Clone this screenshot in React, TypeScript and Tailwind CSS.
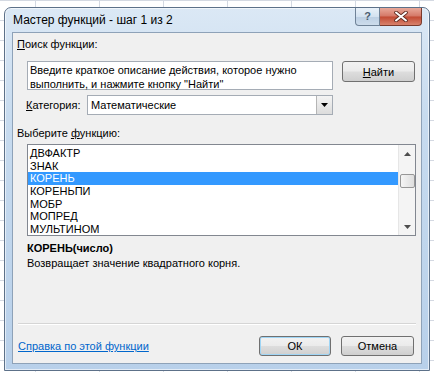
const items = ["ДВФАКТР", "ЗНАК", "КОРЕНЬ", "КОРЕНЬПИ", "МОБР", "МОПРЕД", "МУЛЬТИНОМ"];

const btn =
  "flex items-center justify-center rounded-[3px] border border-[#707070] bg-[linear-gradient(#f2f2f2_0%,#ebebeb_48%,#dddddd_52%,#cfcfcf_100%)] text-[11px] text-black";

const App = () => {
  return (
    <div
      className="w-[434px] h-[372px] overflow-hidden pt-[7px] pl-[4px] bg-white bg-[linear-gradient(90deg,#d4d9e2_1px,transparent_1px),linear-gradient(#d4d9e2_1px,transparent_1px)] bg-[size:64px_20px] bg-[position:35px_0px]"
      style={{ fontFamily: '"Liberation Sans", Arial, sans-serif' }}
    >
      <div className="w-[426px] h-[364px] rounded-t-[7px] border border-[#5d7189] bg-[linear-gradient(#dbe8f5_0%,#c7dbef_30%,#b8d0ea_100%)] px-[7px] pb-[6px] flex flex-col shadow-[inset_0_0_0_1px_rgba(255,255,255,0.6)]">
        {/* title bar */}
        <div className="h-[24px] flex items-start">
          <span className="mt-[5px] ml-[1px] text-[12px] leading-[14px] text-black">Мастер функций - шаг 1 из 2</span>
          <div className="ml-auto flex">
            <div className="w-[25px] h-[18px] rounded-bl-[4px] border border-t-0 border-[#6f8297] bg-[linear-gradient(#e9f1f9_0%,#d4e2f0_50%,#bccfe3_52%,#cddcec_100%)] flex items-center justify-center text-[11px] font-bold text-[#4b5d70]">
              ?
            </div>
            <div className="w-[42px] h-[18px] rounded-br-[4px] border border-l-0 border-t-0 border-[#7a3a2c] bg-[linear-gradient(#e9a99a_0%,#d47867_48%,#c24a33_52%,#d8826c_100%)] flex items-center justify-center">
              <svg width="14" height="11" viewBox="0 0 14 11">
                <path d="M2 1.5 L12 9.5 M12 1.5 L2 9.5" stroke="#5b2a20" strokeWidth="3.6" strokeLinecap="round" />
                <path d="M2 1.5 L12 9.5 M12 1.5 L2 9.5" stroke="#ffffff" strokeWidth="2" strokeLinecap="round" />
              </svg>
            </div>
          </div>
        </div>

        {/* client area */}
        <div className="flex-1 border border-[#8ea2b8] bg-[#f0f0f0] flex flex-col text-[11px] text-black leading-[14px]">
          <div className="mt-[4px] ml-[4px] h-[14px]">
            <span className="underline">П</span>оиск функции:
          </div>

          <div className="mt-[10px] ml-[14px] flex items-start">
            <div className="w-[306px] h-[29px] border border-[#a5acb5] bg-white pl-[2px] pt-[1px] leading-[14px]">
              Введите краткое описание действия, которое нужно
              <br />
              выполнить, и нажмите кнопку "Найти"
            </div>
            <button className={`${btn} ml-[9px] w-[73px] h-[21px]`}>
              <span className="underline">Н</span>айти
            </button>
          </div>

          <div className="mt-[5px] ml-[13px] flex items-center h-[20px]">
            <span className="w-[61px]">
              <span className="underline">К</span>атегория:
            </span>
            <div className="w-[246px] h-[20px] border border-[#a5acb5] bg-white flex items-center">
              <span className="pl-[3px] flex-1">Математические</span>
              <div className="w-[16px] h-[18px] border-l border-[#b5b5b5] bg-[linear-gradient(#f4f4f4,#dcdcdc)] flex items-center justify-center">
                <svg width="7" height="4" viewBox="0 0 7 4">
                  <path d="M0 0 H7 L3.5 4 Z" fill="#000" />
                </svg>
              </div>
            </div>
          </div>

          <div className="mt-[11px] ml-[4px] h-[14px]">
            Выберите <span className="underline">ф</span>ункцию:
          </div>

          <div className="mt-[4px] ml-[14px] w-[389px] h-[92px] border border-[#828790] bg-white flex">
            <div className="flex-1 pt-[2px]">
              {items.map((it) => (
                <div
                  key={it}
                  className={`h-[12.67px] leading-[12.67px] pl-[2px] ${
                    it === "КОРЕНЬ" ? "bg-[#3399ff] text-white" : "text-black"
                  }`}
                >
                  {it}
                </div>
              ))}
            </div>
            <div className="w-[17px] bg-[#f4f4f4] border-l border-[#e6e6e6] flex flex-col items-center">
              <svg className="mt-[7px]" width="7" height="4" viewBox="0 0 7 4">
                <path d="M3.5 0 L7 4 H0 Z" fill="#4d4d4d" />
              </svg>
              <div className="mt-[18px] w-[15px] h-[14px] rounded-[2px] border border-[#979797] bg-[linear-gradient(90deg,#f5f5f5,#dedede)]" />
              <svg className="mt-auto mb-[6px]" width="7" height="4" viewBox="0 0 7 4">
                <path d="M0 0 H7 L3.5 4 Z" fill="#4d4d4d" />
              </svg>
            </div>
          </div>

          <div className="mt-[5px] ml-[14px] h-[14px] font-bold">КОРЕНЬ(число)</div>
          <div className="mt-[1px] ml-[14px] h-[14px]">Возвращает значение квадратного корня.</div>

          <div className="mt-[53px] ml-[5px] w-[398px] h-[2px] border-t border-[#d5d5d5] border-b border-b-white" />

          <div className="mt-[11px] ml-[5px] flex items-center">
            <a className="text-[#0066cc] underline">Справка по этой функции</a>
            <button className={`${btn} ml-auto w-[72px] h-[20px] border-[#3c7fb1] shadow-[inset_0_0_0_1px_#9fd5f5]`}>
              ОК
            </button>
            <button className={`${btn} ml-[10px] mr-[7px] w-[73px] h-[20px]`}>Отмена</button>
          </div>
        </div>
      </div>
    </div>
  );
};

export default App;
